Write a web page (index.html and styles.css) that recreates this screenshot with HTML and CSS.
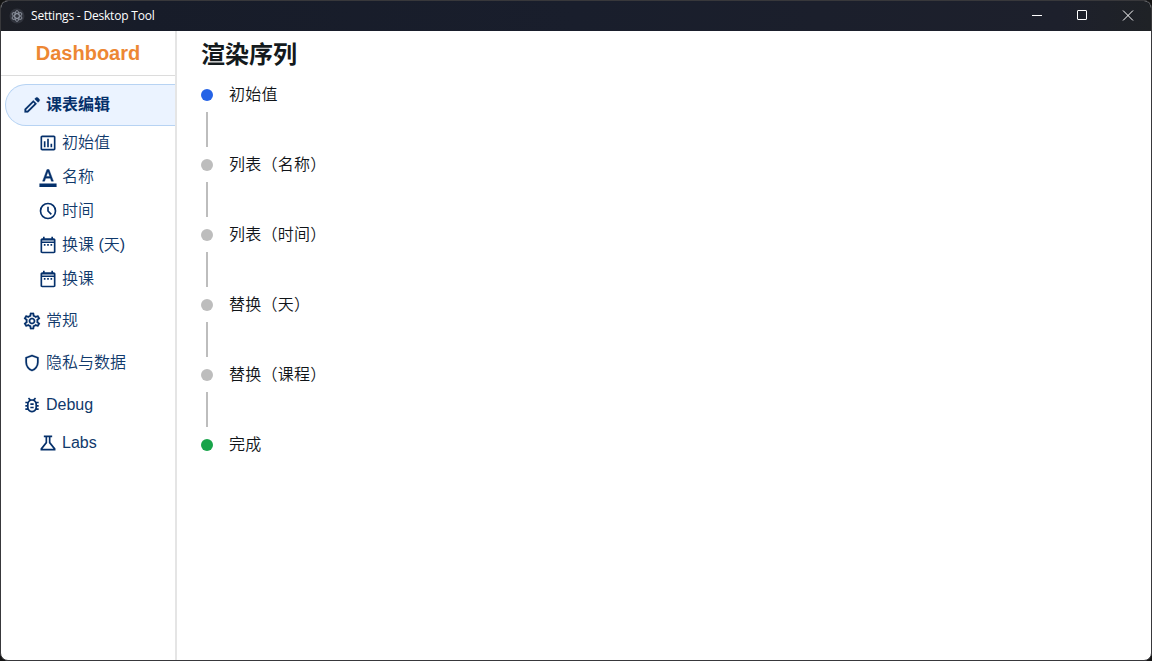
FILE: index.html
```html
<!DOCTYPE html>
<html lang="zh-CN">
<head>
<meta charset="utf-8">
<title>Settings - Desktop Tool</title>
<link rel="stylesheet" href="styles.css">
</head>
<body>
<div class="window">
  <header class="titlebar">
    <span class="app-icon"><svg viewBox="0 0 16 16" width="16" height="16" fill="none" stroke="#9aa1ad" stroke-width=".8"><circle cx="8" cy="8" r="7.5" fill="#30333c" stroke="none"/><ellipse cx="8" cy="8" rx="5.5" ry="2.200" transform="rotate(30 8 8)"/><ellipse cx="8" cy="8" rx="5.5" ry="2.200" transform="rotate(90 8 8)"/><ellipse cx="8" cy="8" rx="5.5" ry="2.200" transform="rotate(150 8 8)"/></svg></span>
    <span class="title">Settings - Desktop Tool</span>
    <div class="controls">
      <span class="control"><svg width="12" height="12" viewBox="0 0 12 12"><path d="M1 5.5h10"/></svg></span>
      <span class="control"><svg width="12" height="12" viewBox="0 0 12 12"><rect x="1.5" y=".5" width="9" height="9" rx=".5"/></svg></span>
      <span class="control"><svg width="12" height="12" viewBox="0 0 12 12"><path d="M1 .5l10 10M11 .5L1 10.500"/></svg></span>
    </div>
  </header>
  <div class="body">
    <aside class="sidebar">
      <div class="brand">Dashboard</div>
      <nav class="nav">
        <a class="item active"><svg class="icon heavy" viewBox="0 0 24 24"><path d="M5 19h1.4l8.625-8.625-1.4-1.4L5 17.6ZM19.3 8.925l-4.25-4.2L16.45 3.3q.575-.575 1.413-.575.837 0 1.412.575l1.4 1.4q.575.575.6 1.388.025.812-.55 1.387ZM17.85 10.4 7.25 21H3v-4.25l10.6-10.6Z"/></svg><span>课表编辑</span></a>
        <a class="item sub"><svg class="icon" viewBox="0 0 24 24"><path d="M7 10h2v7H7zm4-3h2v10h-2zm4 6h2v4h-2zM5 21q-.825 0-1.412-.587Q3 19.825 3 19V5q0-.825.588-1.413Q4.175 3 5 3h14q.825 0 1.413.587Q21 4.175 21 5v14q0 .825-.587 1.413Q19.825 21 19 21Zm0-2h14V5H5Z"/></svg><span>初始值</span></a>
        <a class="item sub"><svg class="icon letter" viewBox="0 0 24 24"><path d="M2 24v-4h20v4Zm3.5-7L10.75 3h2.5L18.5 17h-2.4l-1.25-3.6H9.2L7.9 17Zm4.4-5.6h4.2l-2.05-5.8h-.1Z"/></svg><span>名称</span></a>
        <a class="item sub"><svg class="icon" viewBox="0 0 24 24"><path fill-rule="evenodd" d="M15.3 16.7l1.4-1.4-3.7-3.7V7h-2v5.4ZM12 22a10 10 0 1 1 0-20 10 10 0 0 1 0 20Zm0-2a8 8 0 1 0 0-16 8 8 0 0 0 0 16Z"/></svg><span>时间</span></a>
        <a class="item sub"><svg class="icon" viewBox="0 0 24 24"><path d="M5 22q-.825 0-1.412-.587Q3 20.825 3 20V6q0-.825.588-1.412Q4.175 4 5 4h1V2h2v2h8V2h2v2h1q.825 0 1.413.588Q21 5.175 21 6v14q0 .825-.587 1.413Q19.825 22 19 22Zm0-2h14V9.600H5ZM5 7.800h14V6.500H5ZM7 10.800h2v2H7zm4 0h2v2h-2zm4 0h2v2h-2z"/></svg><span>换课 (天)</span></a>
        <a class="item sub"><svg class="icon" viewBox="0 0 24 24"><path d="M5 22q-.825 0-1.412-.587Q3 20.825 3 20V6q0-.825.588-1.412Q4.175 4 5 4h1V2h2v2h8V2h2v2h1q.825 0 1.413.588Q21 5.175 21 6v14q0 .825-.587 1.413Q19.825 22 19 22Zm0-2h14V9.600H5ZM5 7.800h14V6.500H5ZM7 10.800h2v2H7zm4 0h2v2h-2zm4 0h2v2h-2z"/></svg><span>换课</span></a>
        <a class="item general"><svg class="icon heavy" viewBox="0 0 24 24"><path d="M19.43 12.98c.04-.32.07-.64.07-.98 0-.34-.03-.66-.07-.98l2.11-1.65c.19-.15.24-.42.12-.64l-2-3.46c-.09-.16-.26-.25-.44-.25-.06 0-.12.01-.17.03l-2.49 1c-.52-.4-1.08-.73-1.69-.98l-.38-2.65C14.46 2.18 14.25 2 14 2h-4c-.25 0-.46.18-.49.42l-.38 2.65c-.61.25-1.17.59-1.69.98l-2.49-1c-.06-.02-.12-.03-.18-.03-.17 0-.34.09-.43.25l-2 3.46c-.13.22-.07.49.12.64l2.11 1.65c-.04.32-.07.65-.07.98 0 .33.03.66.07.98l-2.11 1.65c-.19.15-.24.42-.12.64l2 3.46c.09.16.26.25.44.25.06 0 .12-.01.17-.03l2.49-1c.52.4 1.08.73 1.69.98l.38 2.65c.03.24.24.42.49.42h4c.25 0 .46-.18.49-.42l.38-2.65c.61-.25 1.17-.59 1.69-.98l2.49 1c.06.02.12.03.18.03.17 0 .34-.09.43-.25l2-3.46c.12-.22.07-.49-.12-.64l-2.11-1.65zm-1.98-1.71c.04.31.05.52.05.73 0 .21-.02.43-.05.73l-.14 1.13.89.7 1.08.84-.7 1.21-1.27-.51-1.04-.42-.9.68c-.43.32-.84.56-1.25.73l-1.06.43-.16 1.13-.2 1.35h-1.4l-.19-1.35-.16-1.13-1.06-.43c-.43-.18-.83-.41-1.23-.71l-.91-.7-1.06.43-1.27.51-.7-1.21 1.08-.84.89-.7-.14-1.13c-.03-.31-.05-.54-.05-.74s.02-.43.05-.73l.14-1.13-.89-.7-1.08-.84.7-1.21 1.27.51 1.04.42.9-.68c.43-.32.84-.56 1.25-.73l1.06-.43.16-1.13.2-1.35h1.39l.19 1.35.16 1.13 1.06.43c.43.18.83.41 1.23.71l.91.7 1.06-.43 1.27-.51.7 1.21-1.07.85-.89.7.14 1.13zM12 8c-2.21 0-4 1.79-4 4s1.790 4 4 4 4-1.790 4-4-1.790-4-4-4zm0 6c-1.100 0-2-.9-2-2s.9-2 2-2 2 .9 2 2-.9 2-2 2z"/></svg><span>常规</span></a>
        <a class="item"><svg class="icon heavy" viewBox="0 0 24 24"><path d="M12 22q-3.475-.875-5.738-3.988Q4 14.900 4 11.100V5l8-3 8 3v6.100q0 3.800-2.262 6.912Q15.475 21.125 12 22Zm0-2.100q2.600-.825 4.300-3.300 1.700-2.475 1.700-5.500V6.375l-6-2.250-6 2.250V11.100q0 3.025 1.700 5.500 1.700 2.475 4.300 3.300Z"/></svg><span>隐私与数据</span></a>
        <a class="item"><svg class="icon" viewBox="0 0 24 24"><path d="M20 8h-2.810c-.45-.78-1.070-1.450-1.820-1.960L17 4.410 15.590 3l-2.170 2.170C12.960 5.060 12.490 5 12 5s-.96.06-1.410.17L8.410 3 7 4.410l1.620 1.630C7.880 6.550 7.260 7.220 6.810 8H4v2h2.090c-.05.33-.09.66-.09 1v1H4v2h2v1c0 .34.04.67.09 1H4v2h2.810c1.040 1.790 2.970 3 5.190 3s4.150-1.210 5.190-3H20v-2h-2.090c.05-.33.09-.66.09-1v-1h2v-2h-2v-1c0-.34-.04-.67-.09-1H20V8zm-4 4v3c0 2.210-1.790 4-4 4s-4-1.790-4-4v-4c0-2.210 1.790-4 4-4s4 1.790 4 4v1zm-6 2h4v2h-4zm0-4h4v2h-4z"/></svg><span>Debug</span></a>
        <a class="item sub"><svg class="icon" viewBox="0 0 24 24"><path fill-rule="evenodd" d="M3 21v-2.500L9 11V5H7V3h10v2h-2v6l6 7.500V21ZM5.500 19h13L13 12V5h-2v7Z"/></svg><span>Labs</span></a>
      </nav>
    </aside>
    <main class="content">
      <h1 class="heading">渲染序列</h1>
      <ol class="steps">
        <li class="step current"><span class="dot"></span><span class="label">初始值</span></li>
        <li class="step"><span class="dot"></span><span class="label">列表（名称）</span></li>
        <li class="step"><span class="dot"></span><span class="label">列表（时间）</span></li>
        <li class="step"><span class="dot"></span><span class="label">替换（天）</span></li>
        <li class="step"><span class="dot"></span><span class="label">替换（课程）</span></li>
        <li class="step done"><span class="dot"></span><span class="label">完成</span></li>
      </ol>
    </main>
  </div>
</div>
</body>
</html>
```
FILE: styles.css
```css
* { box-sizing: border-box; }
body {
  margin: 0;
  background: #141414;
  font-family: "Liberation Sans", "Noto Sans CJK SC", sans-serif;
  font-size: 16px;
}
.window {
  display: flex;
  flex-direction: column;
  height: 661px;
  border: 1px solid #38383b;
  border-radius: 8px;
  overflow: hidden;
  background: #fff;
}
.titlebar {
  display: flex;
  align-items: center;
  height: 30px;
  padding: 0 1px 1px 8px;
  background: linear-gradient(90deg, #1c1e25 0, #171c29 12%, #191e2c 50%, #1d202c 92%, #1f2226);
  color: #fff;
}
.app-icon { display: flex; width: 16px; height: 16px; }
.title {
  flex: 1;
  margin-left: 6px;
  font: 12px/16px "Open Sans", "Noto Sans", sans-serif;
  letter-spacing: -.2px;
}
.controls { display: flex; }
.control {
  display: flex;
  align-items: center;
  justify-content: center;
  width: 45.500px;
  height: 28px;
}
.control:last-child { width: 45px; }
.control svg { fill: none; stroke: #fff; stroke-width: 1; }
.body { display: flex; flex: 1; min-height: 0; }
.sidebar {
  width: 176px;
  border-right: 2px solid #e5e5e5;
}
.brand {
  height: 45px;
  border-bottom: 1px solid #dcdcdc;
  color: #ed8733;
  font-size: 20px;
  font-weight: 700;
  line-height: 44px;
  text-align: center;
}
.nav { display: flex; flex-direction: column; padding: 8px 0 0 4px; }
.item {
  display: flex;
  align-items: center;
  gap: 4px;
  height: 42px;
  padding-left: 17px;
  color: #10396b;
  font-weight: 350;
  line-height: 24px;
  white-space: nowrap;
}
.item.active {
  padding-left: 16px;
  border: 1px solid #b7d3f3;
  border-right: 0;
  border-radius: 21px 0 0 21px;
  background: #ebf3ff;
  color: #05306b;
  font-weight: 700;
}
.item.sub { height: 34px; padding-left: 33px; }
.item.general { margin-top: 4px; }
.icon { flex: none; width: 20px; height: 20px; fill: #05306b; }
.heavy { stroke: #05306b; stroke-width: .2; }
.letter { stroke: #05306b; stroke-width: .5; }
.content { flex: 1; padding: 6px 24px; }
.heading {
  margin: 0;
  color: #141a1d;
  font-size: 24px;
  font-weight: 700;
  line-height: 36px;
}
.steps { margin: 9px 0 0; padding: 0; list-style: none; }
.step {
  display: grid;
  grid-template-columns: 12px auto;
  grid-template-rows: 26px 35px;
  column-gap: 16px;
  align-items: center;
  height: 70px;
  color: #101418;
  font-weight: 350;
  letter-spacing: .25px;
}
.step:not(:last-child)::after {
  content: "";
  align-self: start;
  justify-self: center;
  width: 2px;
  height: 35px;
  margin-top: 4px;
  background: #bdbdbd;
}
.label { line-height: 20px; }
.dot { width: 12px; height: 12px; border-radius: 50%; background: #bdbdbd; }
.current .dot { background: #2563e6; }
.done .dot { background: #18a44a; }
```
